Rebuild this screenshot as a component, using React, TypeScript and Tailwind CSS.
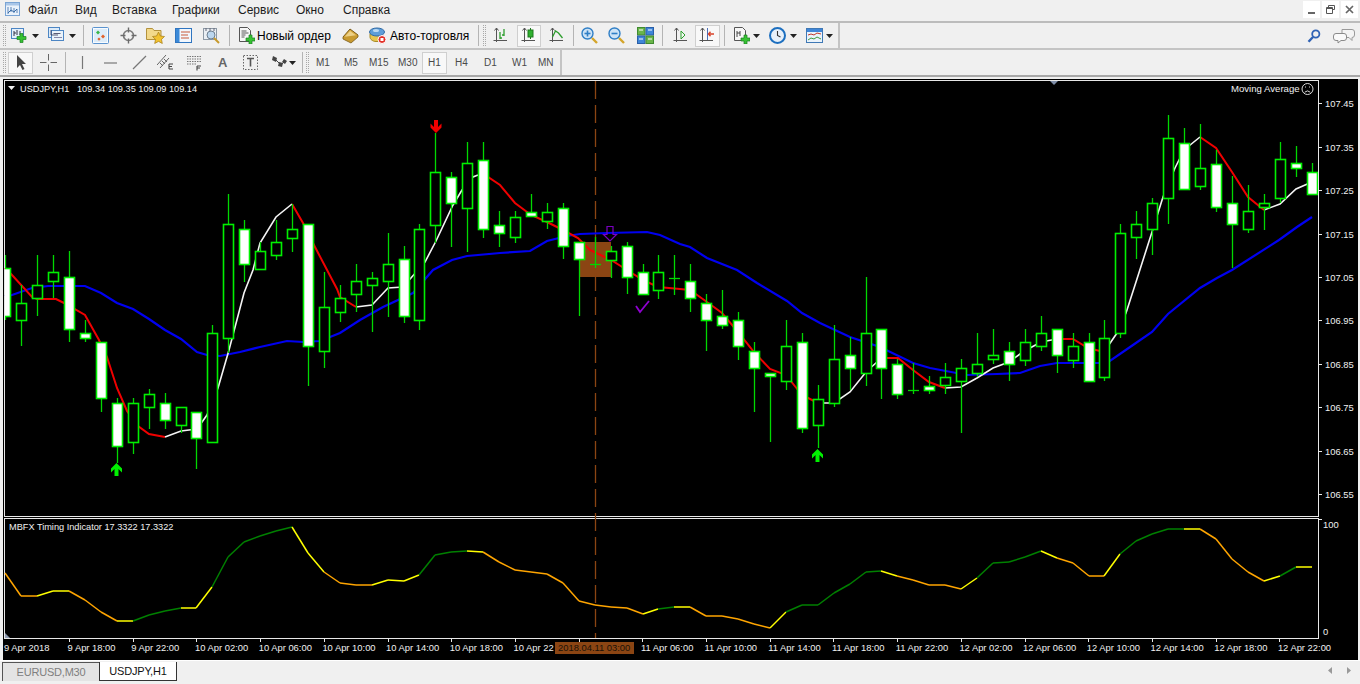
import type { ReactNode } from "react";

const FONT = "'Liberation Sans', Arial, sans-serif";
const STEP = 15.93;
const cx = (k: number) => Math.round(5.3 + STEP * k);

// k is implied by position: wick top, body top, body bottom, wick bottom, bearish (white body)
const candles: [number, number, number, number, number][] = [
  [255, 268, 316, 320, 1], [285, 303, 320, 346, 0], [255, 285, 298, 316, 0], [255, 272, 281, 298, 0],
  [251, 277, 329, 342, 1], [320, 333, 338, 342, 1], [342, 342, 398, 412, 1], [398, 403, 446, 463, 1],
  [398, 403, 442, 454, 0], [389, 394, 407, 429, 0], [393, 403, 420, 429, 1], [407, 407, 425, 433, 0],
  [412, 412, 438, 469, 1], [325, 333, 442, 442, 0], [194, 224, 338, 353, 0], [220, 229, 264, 282, 1],
  [242, 251, 269, 269, 0], [220, 242, 255, 260, 0], [204, 229, 238, 252, 0], [224, 224, 346, 386, 1],
  [272, 307, 351, 368, 0], [285, 298, 312, 322, 0], [264, 281, 294, 312, 0], [272, 278, 285, 332, 0],
  [233, 264, 281, 317, 0], [246, 259, 316, 323, 1], [224, 229, 320, 330, 0], [133, 172, 225, 243, 0],
  [172, 177, 203, 247, 1], [142, 163, 208, 252, 0], [142, 160, 229, 238, 1], [211, 225, 233, 247, 1],
  [211, 217, 237, 243, 0], [194, 212, 216, 216, 1], [203, 212, 221, 229, 0], [203, 208, 246, 259, 1],
  [242, 242, 259, 316, 1], [237, 264, 264, 268, 0], [246, 251, 260, 278, 0], [242, 246, 277, 294, 1],
  [264, 272, 294, 294, 1], [255, 272, 290, 299, 0], [255, 278, 278, 295, 0], [264, 281, 298, 312, 1],
  [294, 303, 320, 351, 1], [290, 316, 325, 329, 1], [312, 320, 346, 360, 1], [342, 351, 368, 412, 1],
  [373, 373, 376, 442, 1], [320, 346, 381, 390, 0], [333, 342, 428, 433, 1], [385, 399, 425, 448, 0],
  [325, 359, 403, 407, 0], [337, 355, 368, 390, 1], [277, 333, 373, 386, 0], [329, 329, 368, 399, 1],
  [359, 364, 394, 399, 1], [363, 390, 390, 394, 0], [376, 386, 390, 394, 1], [363, 377, 385, 394, 0],
  [359, 368, 381, 433, 0], [333, 364, 373, 377, 0], [329, 355, 359, 364, 0], [342, 351, 364, 381, 1],
  [329, 342, 360, 366, 0], [316, 333, 346, 351, 0], [329, 329, 355, 373, 1], [333, 346, 360, 368, 0],
  [333, 342, 381, 381, 1], [320, 338, 377, 381, 0], [224, 233, 333, 338, 0], [211, 224, 237, 259, 0],
  [198, 203, 229, 255, 0], [115, 138, 198, 224, 0], [128, 143, 189, 189, 1], [124, 168, 186, 190, 0],
  [150, 164, 207, 212, 1], [176, 203, 224, 268, 1], [185, 211, 229, 233, 0], [194, 203, 207, 230, 0],
  [142, 159, 198, 203, 0], [146, 163, 168, 177, 1], [163, 172, 194, 194, 1],
];

const blue =
  "5,296 12,295 32,288 48,286 64,286 85,286 101,293 117,303 133,309 149,319 165,330 181,339 197,352 207,355 220,356 240,352 260,347 287,341 303,342 320,341 340,333 360,320 383,307 413,293 433,270 452,260 467,256 500,253 530,251 547,241 567,236 580,234 607,233 647,232 660,235 680,244 690,247 707,258 737,270 757,283 787,301 802,313 820,323 850,337 880,347 913,363 930,368 967,375 997,374 1020,373 1040,366 1057,363 1107,363 1133,345 1152,332 1168,314 1200,288 1217,278 1232,270 1279,240 1297,227 1312,217";

const redSegments = [
  "5,268 12,275 32,297 37,299 56,299 64,303 85,315 99,340 107,357 117,388 127,411 138,426 149,434 165,437",
  "292,204 303,223 315,247 337,289 340,297 356,307",
  "478,175 488,177 500,185 515,203 531,215 547,222 563,230 578,238 590,250 611,260 627,270 643,280 658,287 680,289 690,290 707,302 722,313 738,332 754,352 770,369 786,375 802,395 818,403",
  "877,362 887,358 898,358 913,370 929,382 945,388",
  "1057,339 1073,339 1088,348 1104,352",
  "1200,137 1216,148 1232,172 1248,197 1264,210",
];
const whiteSegments = [
  "165,437 181,431 197,429 207,415 218,388 229,350 244,293 253,270 260,243 276,217 292,204",
  "356,307 372,305 388,288 403,287 425,262 436,241 453,205 462,190 473,177 478,175",
  "818,403 834,403 850,392 866,372 877,362",
  "945,388 961,387 977,378 993,368 1009,362 1020,354 1030,348 1041,342 1057,339",
  "1104,352 1117,333 1126,313 1136,282 1152,232 1163,197 1175,168 1184,150 1200,137",
  "1264,210 1280,204 1296,189 1312,182",
];

const timing = [
  573, 596, 596, 591, 591, 600, 612, 621, 621, 615, 611, 608, 608, 587, 557, 542, 536, 531, 527, 553, 572, 583, 585, 585, 580, 581, 575, 555,
  552, 551, 552, 562, 570, 572, 574, 583, 601, 605, 607, 608, 614, 609, 607, 607, 616, 616, 619, 624, 628, 612, 605, 605, 593, 584, 572, 571,
  576, 580, 585, 585, 589, 578, 563, 562, 557, 551, 558, 563, 576, 576, 554, 541, 534, 529, 529, 529, 539, 559, 572, 581, 576, 567, 567,
];
const timingColor = "ooyyoooyggg yyggggg yyooo yyy ggg yoooooo oooo yg yooooo yggggggy oooo ygggg yooo yggggyoooo yg y".replace(/ /g, "");
const colorOf: Record<string, string> = { o: "#ffa500", y: "#ffff00", g: "#008000" };

const prices = [
  ["107.45", 103], ["107.35", 147], ["107.25", 190], ["107.15", 234], ["107.05", 277],
  ["106.95", 320], ["106.85", 364], ["106.75", 407], ["106.65", 451], ["106.55", 494],
] as const;

// the 10 Apr 22:00 label is cut off by the crosshair time box
const dates = [
  "9 Apr 18:00", "9 Apr 22:00", "10 Apr 02:00", "10 Apr 06:00", "10 Apr 10:00", "10 Apr 14:00", "10 Apr 18:00", "10 Apr 22", "",
  "11 Apr 06:00", "11 Apr 10:00", "11 Apr 14:00", "11 Apr 18:00", "11 Apr 22:00", "12 Apr 02:00", "12 Apr 06:00", "12 Apr 10:00",
  "12 Apr 14:00", "12 Apr 18:00", "12 Apr 22:00",
];

function upArrow(x: number, t: number) {
  return `${x},${t} ${x + 5.5},${t + 5.5} ${x + 5.5},${t + 9.5} ${x + 2},${t + 6} ${x + 2},${t + 13} ${x - 2},${t + 13} ${x - 2},${t + 6} ${x - 5.5},${t + 9.5} ${x - 5.5},${t + 5.5}`;
}
function downArrow(x: number, b: number) {
  return `${x},${b} ${x + 5.5},${b - 5.5} ${x + 5.5},${b - 9.5} ${x + 2},${b - 6} ${x + 2},${b - 13} ${x - 2},${b - 13} ${x - 2},${b - 6} ${x - 5.5},${b - 9.5} ${x - 5.5},${b - 5.5}`;
}

function Chart() {
  const labelStyle = { fontFamily: FONT, fontSize: 9.4, fill: "#f0f0f0" };
  const headStyle = { ...labelStyle, fontSize: 9.2 };
  return (
    <svg viewBox="3 79 1355 581" width={1355} height={581} className="block bg-black">
      <defs>
        <clipPath id="pane">
          <rect x={5} y={81} width={1313} height={435} />
        </clipPath>
      </defs>
      {/* frames */}
      <g stroke="#e8e8e8" strokeWidth={1} fill="none" shapeRendering="crispEdges">
        <path d="M4.5 80.5H1318.5V516.5H4.5Z" />
        <path d="M4.5 518.5H1318.5V638.5H4.5Z" />
      </g>
      <rect x={579} y={242} width={32} height={35} fill="#8b4513" />
      <line x1={595.5} y1={81} x2={595.5} y2={638} stroke="#8b4513" strokeWidth={1.3} strokeDasharray="18 6" />

      <polyline points={blue} fill="none" stroke="#0000f0" strokeWidth={2.2} />
      {redSegments.map((p) => (
        <polyline key={p} points={p} fill="none" stroke="#f00000" strokeWidth={2} />
      ))}
      {whiteSegments.map((p) => (
        <polyline key={p} points={p} fill="none" stroke="#f4f4f4" strokeWidth={1.6} />
      ))}

      {/* candles */}
      <g clipPath="url(#pane)">
        {candles.map(([top, bt, bb, bot, bear], k) => {
          const x = cx(k);
          return (
            <g key={k}>
              <line x1={x + 0.5} y1={top} x2={x + 0.5} y2={bot} stroke="#00d800" strokeWidth={1.3} />
              {bt === bb ? (
                <line x1={x - 5} y1={bt + 0.5} x2={x + 6} y2={bt + 0.5} stroke="#00d800" strokeWidth={1.3} />
              ) : (
                <rect x={x - 4.5} y={bt + 0.5} width={10} height={bb - bt} fill={bear ? "#ffffff" : "#000000"} stroke="#00f000" strokeWidth={1.6} />
              )}
            </g>
          );
        })}
      </g>

      {/* signal arrows */}
      <polygon points={upArrow(116.5, 463)} fill="#00f000" />
      <polygon points={upArrow(817.5, 449)} fill="#00f000" />
      <polygon points={downArrow(436, 133)} fill="#f00000" />
      <polygon points="607,226.5 613,226.5 613,234.500 616.500,234.500 610,241 603.500,234.500 607,234.500" fill="none" stroke="#7a00c0" strokeWidth={1.2} />
      <polyline points="636,306 640,312 649,301" fill="none" stroke="#9000d0" strokeWidth={1.8} />

      {/* chart shift marks */}
      <polygon points="1050,81 1058,81 1054,85" fill="#7f8ea8" />
      <polygon points="5,633 5,638 10,638" fill="#8f9bb0" />

      {/* header labels */}
      <polygon points="8,86 15,86 11.500,90" fill="#f0f0f0" />
      <text x={20} y={91.5} style={headStyle}>USDJPY,H1</text>
      <text x={77} y={91.5} style={headStyle}>109.34 109.35 109.09 109.14</text>
      <text x={1231} y={92} style={{ ...labelStyle, fontSize: 9.6 }}>Moving Average</text>
      <g stroke="#f0f0f0" fill="none" strokeWidth={0.9}>
        <circle cx={1307.5} cy={89} r={5.5} />
        <path d="M1304.700 92.200Q1307.500 89.600 1310.300 92.200" />
        <path d="M1305 87h1M1309 87h1" />
      </g>
      <text x={9} y={530} style={headStyle}>MBFX Timing Indicator 17.3322 17.3322</text>

      {/* timing oscillator */}
      {timing.slice(0, -1).map((y, k) => (
        <line key={k} x1={cx(k)} y1={y} x2={cx(k + 1)} y2={timing[k + 1]} stroke={colorOf[timingColor[k]] ?? "#ffa500"} strokeWidth={1.5} />
      ))}

      {/* price axis */}
      <g stroke="#e8e8e8" shapeRendering="crispEdges">
        {prices.map(([, y]) => (
          <line key={y} x1={1319} y1={y + 0.5} x2={1322} y2={y + 0.5} />
        ))}
        <line x1={1319} y1={519.5} x2={1322} y2={519.5} />
      </g>
      {prices.map(([p, y]) => (
        <text key={p} x={1325} y={y + 4} style={labelStyle}>{p}</text>
      ))}
      <text x={1323} y={528} style={labelStyle}>100</text>
      <text x={1323} y={635} style={labelStyle}>0</text>

      {/* time axis */}
      <g stroke="#e8e8e8" shapeRendering="crispEdges">
        {Array.from({ length: 20 }, (_, i) => (
          <line key={i} x1={69.5 + 63.7 * i} y1={639} x2={69.5 + 63.7 * i} y2={642} />
        ))}
      </g>
      <text x={4} y={651} style={labelStyle}>9 Apr 2018</text>
      {dates.map((d, i) =>
        d ? (
          <text key={i} x={67.6 + 63.7 * i} y={651} style={labelStyle}>{d}</text>
        ) : null,
      )}
      <rect x={555} y={642} width={79} height={12} fill="#8b4513" />
      <text x={558} y={651} style={{ ...labelStyle, fill: "#1a1208" }}>2018.04.11 03:00</text>
    </svg>
  );
}

function Ic({ className, children, w = 17, h = 17 }: { className?: string; children: ReactNode; w?: number; h?: number }) {
  return (
    <svg viewBox={`0 0 ${w} ${h}`} width={w} height={h} className={`shrink-0 ${className ?? ""}`}>
      {children}
    </svg>
  );
}

const plus = (x: number, y: number, s = 3) =>
  `M${x + s} ${y}h${s}v${s}h${s}v${s}h-${s}v${s}h-${s}v-${s}h-${s}v-${s}h${s}z`;
const GreenPlus = ({ x, y, s = 3 }: { x: number; y: number; s?: number }) => (
  <path d={plus(x, y, s)} fill="#37c233" stroke="#1a7f1f" strokeWidth={0.7} />
);

const Drop = ({ className }: { className?: string }) => (
  <svg viewBox="0 0 7 4" width={7} height={4} className={`shrink-0 ${className ?? ""}`}>
    <path d="M0 0h7L3.500 4z" fill="#222" />
  </svg>
);

const Sep = ({ className }: { className?: string }) => <div className={`h-[21px] w-px shrink-0 bg-[#b4b4b4] ${className ?? ""}`} />;
const Grip = ({ className }: { className?: string }) => (
  <div className={`h-[21px] w-[3px] shrink-0 border-x border-dotted border-[#a8a8a8] ${className ?? ""}`} />
);

function NewChartIcon({ className }: { className?: string }) {
  return (
    <Ic className={className}>
      <rect x={0.5} y={1.5} width={12} height={10} fill="#e4f0fb" stroke="#4d86c4" />
      <path d="M3 4v5M3 6h2M6 3v5M9 4v4" stroke="#334" fill="none" />
      <GreenPlus x={6} y={6.5} />
    </Ic>
  );
}
function ProfilesIcon({ className }: { className?: string }) {
  return (
    <Ic className={className}>
      <rect x={0.5} y={0.5} width={11} height={10} fill="#dcebf9" stroke="#4d86c4" />
      <rect x={3.5} y={3.5} width={12} height={10} fill="#eaf3fb" stroke="#4d86c4" />
      <path d="M3 3v5h7M5.500 6.500h7" stroke="#335" fill="none" strokeWidth={0.8} />
      <path d="M6 10.500h8" stroke="#88a" />
    </Ic>
  );
}
function MarketIcon({ className }: { className?: string }) {
  return (
    <Ic className={className}>
      <rect x={0.5} y={0.5} width={16} height={16} rx={1} fill="#f7fbff" stroke="#5a93cf" />
      <rect x={2} y={2} width={13} height={13} fill="#dcecf9" />
      <path d="M6 3.500l2 2-2 2-2-2z" fill="#39b54a" />
      <path d="M11 7.500l2 2-2 2-2-2z" fill="#e2602a" />
      <path d="M7 10.500l1.600 1.600L7 13.700l-1.600-1.600z" fill="#e2602a" />
    </Ic>
  );
}
function CrossIcon({ className }: { className?: string }) {
  return (
    <Ic className={className}>
      <circle cx={8.5} cy={8.5} r={5} fill="none" stroke="#7a7a7a" strokeWidth={1.6} />
      <path d="M8.500 0.500v5M8.500 11.500v5M0.500 8.500h5M11.500 8.500h5" stroke="#6a6a6a" strokeWidth={1.4} />
    </Ic>
  );
}
function FolderStarIcon({ className }: { className?: string }) {
  return (
    <Ic className={className} w={19} h={17}>
      <path d="M0.500 1.500h6l1.500 2h7v9H0.500z" fill="#f3d98a" stroke="#b3923d" />
      <path d="M12.500 5l1.900 4 4.100.5-3 2.900.8 4.100-3.800-2.100-3.800 2.100.8-4.100-3-2.900 4.100-.5z" fill="#f2c230" stroke="#a47b16" strokeWidth={0.7} />
    </Ic>
  );
}
function NavigatorIcon({ className }: { className?: string }) {
  return (
    <Ic className={className}>
      <rect x={0.5} y={1.5} width={16} height={14} fill="#f2f7fd" stroke="#2f75c0" />
      <rect x={1} y={2} width={3.5} height={13} fill="#3c8ad8" />
      <path d="M6 5h9M6 8h7M6 11h8" stroke="#c85a3a" strokeWidth={1.1} />
    </Ic>
  );
}
function TesterIcon({ className }: { className?: string }) {
  return (
    <Ic className={className}>
      <rect x={0.5} y={1.5} width={13} height={11} fill="#e9eef3" stroke="#8d99a5" />
      <path d="M3 1v3M7 1v3M11 1v3" stroke="#667" />
      <circle cx={8} cy={8} r={4} fill="#bcd7ef" stroke="#6e7f90" />
      <path d="M11 11l5 5" stroke="#c79a2d" strokeWidth={2} />
    </Ic>
  );
}
function NewOrderIcon({ className }: { className?: string }) {
  return (
    <Ic className={className}>
      <path d="M1.500 0.500h8l3 3v11h-11z" fill="#f6f6f6" stroke="#555" />
      <path d="M3.500 4h5M3.500 6h7M3.500 8h4M3.500 10h3" stroke="#333" strokeWidth={0.8} />
      <GreenPlus x={8} y={8} />
    </Ic>
  );
}
function GoldIcon({ className }: { className?: string }) {
  return (
    <Ic className={className}>
      <path d="M1 10L8 2l8 6-7 7z" fill="#d8a93c" stroke="#7a5a18" />
      <path d="M3 9.500L8 4l6 4.500-5 4.500z" fill="#ecd087" />
      <path d="M1 10v2l8 4 7-6V8" fill="#c89a30" stroke="#7a5a18" strokeWidth={0.8} />
    </Ic>
  );
}
function AutoIcon({ className }: { className?: string }) {
  return (
    <Ic className={className} w={18} h={17}>
      <path d="M1 6.500v3.500c0 2.500 3 4.500 6 4.500h3V8z" fill="#e8c64f" stroke="#a78a25" />
      <ellipse cx={8} cy={5} rx={7.5} ry={4} fill="#5f9ed9" stroke="#2f6aa5" />
      <ellipse cx={7} cy={3.5} rx={3} ry={1.500} fill="#bcd9f2" />
      <circle cx={13} cy={12.5} r={4} fill="#e23028" stroke="#fff" strokeWidth={1} />
      <rect x={11.5} y={11} width={3} height={3} fill="#fff" />
    </Ic>
  );
}
function BarsIcon({ className, mode }: { className?: string; mode: "bar" | "candle" | "line" }) {
  return (
    <Ic className={className}>
      <path d="M3.500 1v14M14 13.500H0.500M1.500 3.500l2-2.500 2 2.500" stroke="#555" fill="none" />
      {mode === "bar" && <path d="M7 5v7M7 11h2M11 2v7M9 8h2" stroke="#2e9e2e" strokeWidth={1.3} fill="none" />}
      {mode === "candle" && (
        <>
          <path d="M9.500 1v11" stroke="#1f7a1f" />
          <rect x={7} y={3} width={5} height={7} fill="#2fb12f" stroke="#1f7a1f" />
        </>
      )}
      {mode === "line" && <path d="M3.500 10l3-6 3 2 4 5" stroke="#2e9e2e" strokeWidth={1.3} fill="none" />}
    </Ic>
  );
}
function ZoomIcon({ className, minus }: { className?: string; minus?: boolean }) {
  return (
    <Ic className={className}>
      <circle cx={6.5} cy={6.5} r={5.5} fill="#cde3f6" stroke="#2f7fc6" strokeWidth={1.4} />
      <path d="M3.500 6.500h6" stroke="#2f7fc6" strokeWidth={1.6} />
      {!minus && <path d="M6.500 3.500v6" stroke="#2f7fc6" strokeWidth={1.6} />}
      <path d="M11 11l5 5" stroke="#d4a52b" strokeWidth={2.4} />
    </Ic>
  );
}
function TileIcon({ className }: { className?: string }) {
  return (
    <Ic className={className}>
      <rect x={0.5} y={0.5} width={7.5} height={7.5} fill="#6ab54a" stroke="#3f8a2f" />
      <rect x={9} y={0.5} width={7.5} height={7.5} fill="#3f86d8" stroke="#2a5fa8" />
      <rect x={0.5} y={9} width={7.5} height={7.5} fill="#3f86d8" stroke="#2a5fa8" />
      <rect x={9} y={9} width={7.5} height={7.5} fill="#6ab54a" stroke="#3f8a2f" />
      <path d="M2 3h4M11 3h4M2 12h4M11 12h4" stroke="#fff" />
    </Ic>
  );
}
function ScrollIcon({ className }: { className?: string }) {
  return (
    <Ic className={className}>
      <path d="M3.500 1v14M14 13.500H0.500M1.500 3.500l2-2.500 2 2.500" stroke="#555" fill="none" />
      <path d="M8 4l4 4-4 4z" fill="#f2f8f2" stroke="#2e9e2e" />
    </Ic>
  );
}
function ShiftIcon({ className }: { className?: string }) {
  return (
    <Ic className={className}>
      <path d="M3.500 1v14M14 13.500H0.500M1.500 3.500l2-2.500 2 2.500" stroke="#555" fill="none" />
      <path d="M8.500 1v12" stroke="#4a6fb8" />
      <path d="M15 7l-5 0M11.500 4.800L9.500 7l2 2.200" stroke="#d8432a" strokeWidth={1.4} fill="none" />
    </Ic>
  );
}
function TemplateIcon({ className }: { className?: string }) {
  return (
    <Ic className={className}>
      <path d="M1.500 0.500h8l3 3v10h-11z" fill="#f6f6f6" stroke="#555" />
      <path d="M4 4v6M4 6h3M7 4v5" stroke="#333" strokeWidth={0.9} fill="none" />
      <GreenPlus x={8} y={8} />
    </Ic>
  );
}
function ClockIcon({ className }: { className?: string }) {
  return (
    <Ic className={className}>
      <circle cx={8.5} cy={8.5} r={7.5} fill="#e8f1fa" stroke="#1d6fbf" strokeWidth={2} />
      <path d="M8.500 4v4.500l3 1.500" stroke="#333" fill="none" strokeWidth={1.1} />
    </Ic>
  );
}
function PeriodIcon({ className }: { className?: string }) {
  return (
    <Ic className={className}>
      <rect x={0.5} y={1.5} width={16} height={14} fill="#eaf3fb" stroke="#3f78b5" />
      <rect x={1} y={2} width={15} height={3} fill="#3f86d8" />
      <path d="M2 8l3-1 3 1 3-2 4 1" stroke="#c0392b" fill="none" />
      <path d="M2 13l3-2 3 1 3-2 4 2" stroke="#3f9a3f" fill="none" />
    </Ic>
  );
}
function AppIcon({ className }: { className?: string }) {
  return (
    <Ic className={className}>
      <rect x={0.5} y={1.5} width={14} height={13} fill="#eaf2fb" stroke="#7aa4d4" />
      <rect x={1} y={2} width={13} height={2.5} fill="#a9c6e8" />
      <path d="M3 6v7M6 6v5M9 7v5M12 8v4" stroke="#5a83b8" />
      <path d="M3 12l3-3 3 2 3-3" stroke="#3b6ea8" fill="none" />
    </Ic>
  );
}

function Active({ className, children }: { className?: string; children: ReactNode }) {
  return (
    <div className={`flex h-[22px] shrink-0 items-center justify-center border border-[#cfcfcf] bg-[#f8f8f8] ${className ?? ""}`}>
      {children}
    </div>
  );
}

function TfLabel({ className, children }: { className?: string; children: ReactNode }) {
  return <span className={`shrink-0 text-[10px] leading-none text-[#4a4a4a] ${className ?? ""}`}>{children}</span>;
}

export default function App() {
  return (
    <div className="flex h-[684px] w-[1360px] flex-col overflow-hidden bg-[#f0f0f0] text-black" style={{ fontFamily: FONT }}>
      {/* Menu */}
      <div className="flex h-[23px] shrink-0 items-center border-b-2 border-[#bcbcbc] pb-[2px]">
        <AppIcon className="ml-[5px]" />
        <div className="ml-[6px] flex text-[12px] leading-none text-[#1c1c1c]">
          <span className="w-[47px]">Файл</span>
          <span className="w-[37px]">Вид</span>
          <span className="w-[60px]">Вставка</span>
          <span className="w-[66px]">Графики</span>
          <span className="w-[58px]">Сервис</span>
          <span className="w-[47px]">Окно</span>
          <span>Справка</span>
        </div>
        <div className="ml-auto mr-[2px] flex gap-[2px]">
          <div className="flex h-[17px] w-[17px] items-end justify-center bg-white pb-[4px]">
            <div className="h-[2px] w-[7px] bg-[#666]" />
          </div>
          <div className="flex h-[17px] w-[17px] items-center justify-center bg-white">
            <svg viewBox="0 0 9 9" width={9} height={9}>
              <path d="M2.500 2.500v-2h6v4h-2M.5 2.500h6v6h-6zM.5 3.500h6" fill="none" stroke="#555" />
            </svg>
          </div>
          <div className="flex h-[17px] w-[17px] items-center justify-center bg-white">
            <svg viewBox="0 0 9 9" width={9} height={9}>
              <path d="M1 1l7 7M8 1l-7 7" fill="none" stroke="#666" strokeWidth={1.7} />
            </svg>
          </div>
        </div>
      </div>

      {/* Main toolbar */}
      <div className="flex h-[27px] shrink-0 items-center border-b-2 border-[#c4c4c4]">
        <div className="flex h-full w-[840px] items-center border-r-2 border-[#c4c4c4]">
          <Grip className="ml-[3px]" />
          <NewChartIcon className="ml-[5px]" />
          <Drop className="ml-[4px]" />
          <ProfilesIcon className="ml-[9px]" />
          <Drop className="ml-[4px]" />
          <Sep className="ml-[7px]" />
          <MarketIcon className="ml-[8px]" />
          <CrossIcon className="ml-[11px]" />
          <FolderStarIcon className="ml-[9px]" />
          <NavigatorIcon className="ml-[10px]" />
          <TesterIcon className="ml-[11px]" />
          <Sep className="ml-[9px]" />
          <NewOrderIcon className="ml-[8px]" />
          <span className="ml-[2px] w-[73px] whitespace-nowrap text-[12px] leading-none">Новый ордер</span>
          <GoldIcon className="ml-[12px]" />
          <AutoIcon className="ml-[10px]" />
          <span className="ml-[3px] w-[80px] whitespace-nowrap text-[12px] leading-none">Авто-торговля</span>
          <Sep className="ml-[8px]" />
          <Grip className="ml-[4px]" />
          <BarsIcon mode="bar" className="ml-[7px]" />
          <Active className="ml-[7px] w-[24px]">
            <BarsIcon mode="candle" />
          </Active>
          <BarsIcon mode="line" className="ml-[8px]" />
          <Sep className="ml-[7px]" />
          <ZoomIcon className="ml-[7px]" />
          <ZoomIcon minus className="ml-[10px]" />
          <TileIcon className="ml-[12px]" />
          <Sep className="ml-[8px]" />
          <ScrollIcon className="ml-[10px]" />
          <Active className="ml-[5px] w-[25px]">
            <ShiftIcon />
          </Active>
          <Sep className="ml-[4px]" />
          <TemplateIcon className="ml-[8px]" />
          <Drop className="ml-[3px]" />
          <ClockIcon className="ml-[9px]" />
          <Drop className="ml-[4px]" />
          <PeriodIcon className="ml-[9px]" />
          <Drop className="ml-[3px]" />
        </div>
        <svg viewBox="0 0 14 14" width={14} height={14} className="ml-auto shrink-0">
          <circle cx={8.8} cy={5} r={3.6} fill="none" stroke="#2f62b5" strokeWidth={1.8} />
          <path d="M6 8l-4.500 4.800" stroke="#2f62b5" strokeWidth={2.4} />
        </svg>
        <svg viewBox="0 0 22 17" width={22} height={17} className="ml-[12px] mr-[5px] shrink-0">
          <path d="M9 2.500h10a2.500 2.500 0 0 1 2.500 2.500v3a2.500 2.500 0 0 1-2.500 2.500l0 3-3-3H9z" fill="#f4f4f4" stroke="#9a9a9a" />
          <path d="M3 6.500h8a2.500 2.500 0 0 1 2.500 2.500v2A2.500 2.500 0 0 1 11 13.500H8L5 16v-2.500H3A2.500 2.500 0 0 1 .5 11V9A2.500 2.500 0 0 1 3 6.500z" fill="#fafafa" stroke="#8a8a8a" />
        </svg>
      </div>

      {/* Drawing + timeframe toolbar */}
      <div className="flex h-[27px] shrink-0 items-center border-b-2 border-[#a8a8a8]">
        <div className="flex h-full w-[562px] items-center border-r-2 border-[#c4c4c4]">
          <Grip className="ml-[3px]" />
          <Active className="ml-[2px] w-[25px]">
            <svg viewBox="0 0 12 17" width={12} height={17}>
              <path d="M2 1v13l3-3 2.500 5 2-1-2.500-5h4z" fill="#444" />
            </svg>
          </Active>
          <Ic className="ml-[7px]">
            <path d="M8.500 0v6.500M8.500 10.500V17M0 8.500h6.500M10.500 8.500H17" stroke="#666" />
          </Ic>
          <Sep className="ml-[8px]" />
          <Ic className="ml-[8px]">
            <path d="M8.500 2v13" stroke="#777" strokeWidth={1.2} />
          </Ic>
          <Ic className="ml-[11px]">
            <path d="M2 9h13" stroke="#777" strokeWidth={1.2} />
          </Ic>
          <Ic className="ml-[12px]">
            <path d="M2 15L15 2" stroke="#777" strokeWidth={1.2} />
          </Ic>
          <Ic className="ml-[9px]">
            <path d="M0 11L9 1M3 14L12 4M5 7l3 3M3 9l3 3M7 5l3 3" stroke="#666" fill="none" />
            <path d="M12 10h4M12 12.500h3M12 15h4M12 10v5" stroke="#444" strokeWidth={1.1} fill="none" />
          </Ic>
          <Ic className="ml-[12px]">
            <path d="M1 2.500h15M1 5h15M1 7.500h15M1 10h10" stroke="#777" strokeDasharray="1.500 1" />
            <path d="M11 12v4.500M11 12h4M11 14h3" stroke="#444" strokeWidth={1.1} fill="none" />
          </Ic>
          <span className="ml-[15px] w-[8px] text-[13px] font-bold leading-none text-[#666]">A</span>
          <Ic className="ml-[16px]">
            <path d="M1.500 1.500h14v14h-14z" fill="none" stroke="#666" strokeDasharray="1.500 1.500" />
            <path d="M5 4.500h7M8.500 4.500v8" stroke="#555" strokeWidth={1.6} />
          </Ic>
          <Ic className="ml-[12px]">
            <path d="M2 2l4 2-1 4-4-2zM8 8l4 1-1 4-4-1zM13 5l3 2-2 3-3-2z" fill="#444" />
            <path d="M5 6l3 3M11 10l3-3" stroke="#444" />
          </Ic>
          <Drop className="ml-[1px]" />
          <Sep className="ml-[6px]" />
          <Grip className="ml-[3px]" />
          <TfLabel className="ml-[7px] w-[28px]">M1</TfLabel>
          <TfLabel className="w-[25px]">M5</TfLabel>
          <TfLabel className="w-[29px]">M15</TfLabel>
          <TfLabel className="w-[24px]">M30</TfLabel>
          <Active className="w-[25px]">
            <TfLabel>H1</TfLabel>
          </Active>
          <TfLabel className="ml-[8px] w-[29px]">H4</TfLabel>
          <TfLabel className="w-[28px]">D1</TfLabel>
          <TfLabel className="w-[26px]">W1</TfLabel>
          <TfLabel>MN</TfLabel>
        </div>
      </div>

      {/* Chart */}
      <div className="ml-[3px] mt-[2px] shrink-0">
        <Chart />
      </div>

      {/* Tabs */}
      <div className="flex h-[22px] shrink-0 items-start border-t border-white pl-[2px] pt-[1px]">
        <div className="flex h-[19px] w-[97px] items-center justify-center border-l border-t border-[#555] bg-[#e4e4e4] text-[11px] leading-none tracking-[-0.2px] text-[#7f7f7f]">
          EURUSD,M30
        </div>
        <div className="flex h-[19px] w-[78px] items-center justify-center border-x border-b border-[#333] bg-white text-[11px] leading-none tracking-[-0.2px] text-[#111]">
          USDJPY,H1
        </div>
        <div className="ml-auto mr-[9px] mt-[5px] flex gap-[15px]">
          <svg viewBox="0 0 4 7" width={4} height={7}>
            <path d="M4 0v7L0 3.500z" fill="#999" />
          </svg>
          <svg viewBox="0 0 4 7" width={4} height={7}>
            <path d="M0 0v7L4 3.500z" fill="#999" />
          </svg>
        </div>
      </div>
    </div>
  );
}
